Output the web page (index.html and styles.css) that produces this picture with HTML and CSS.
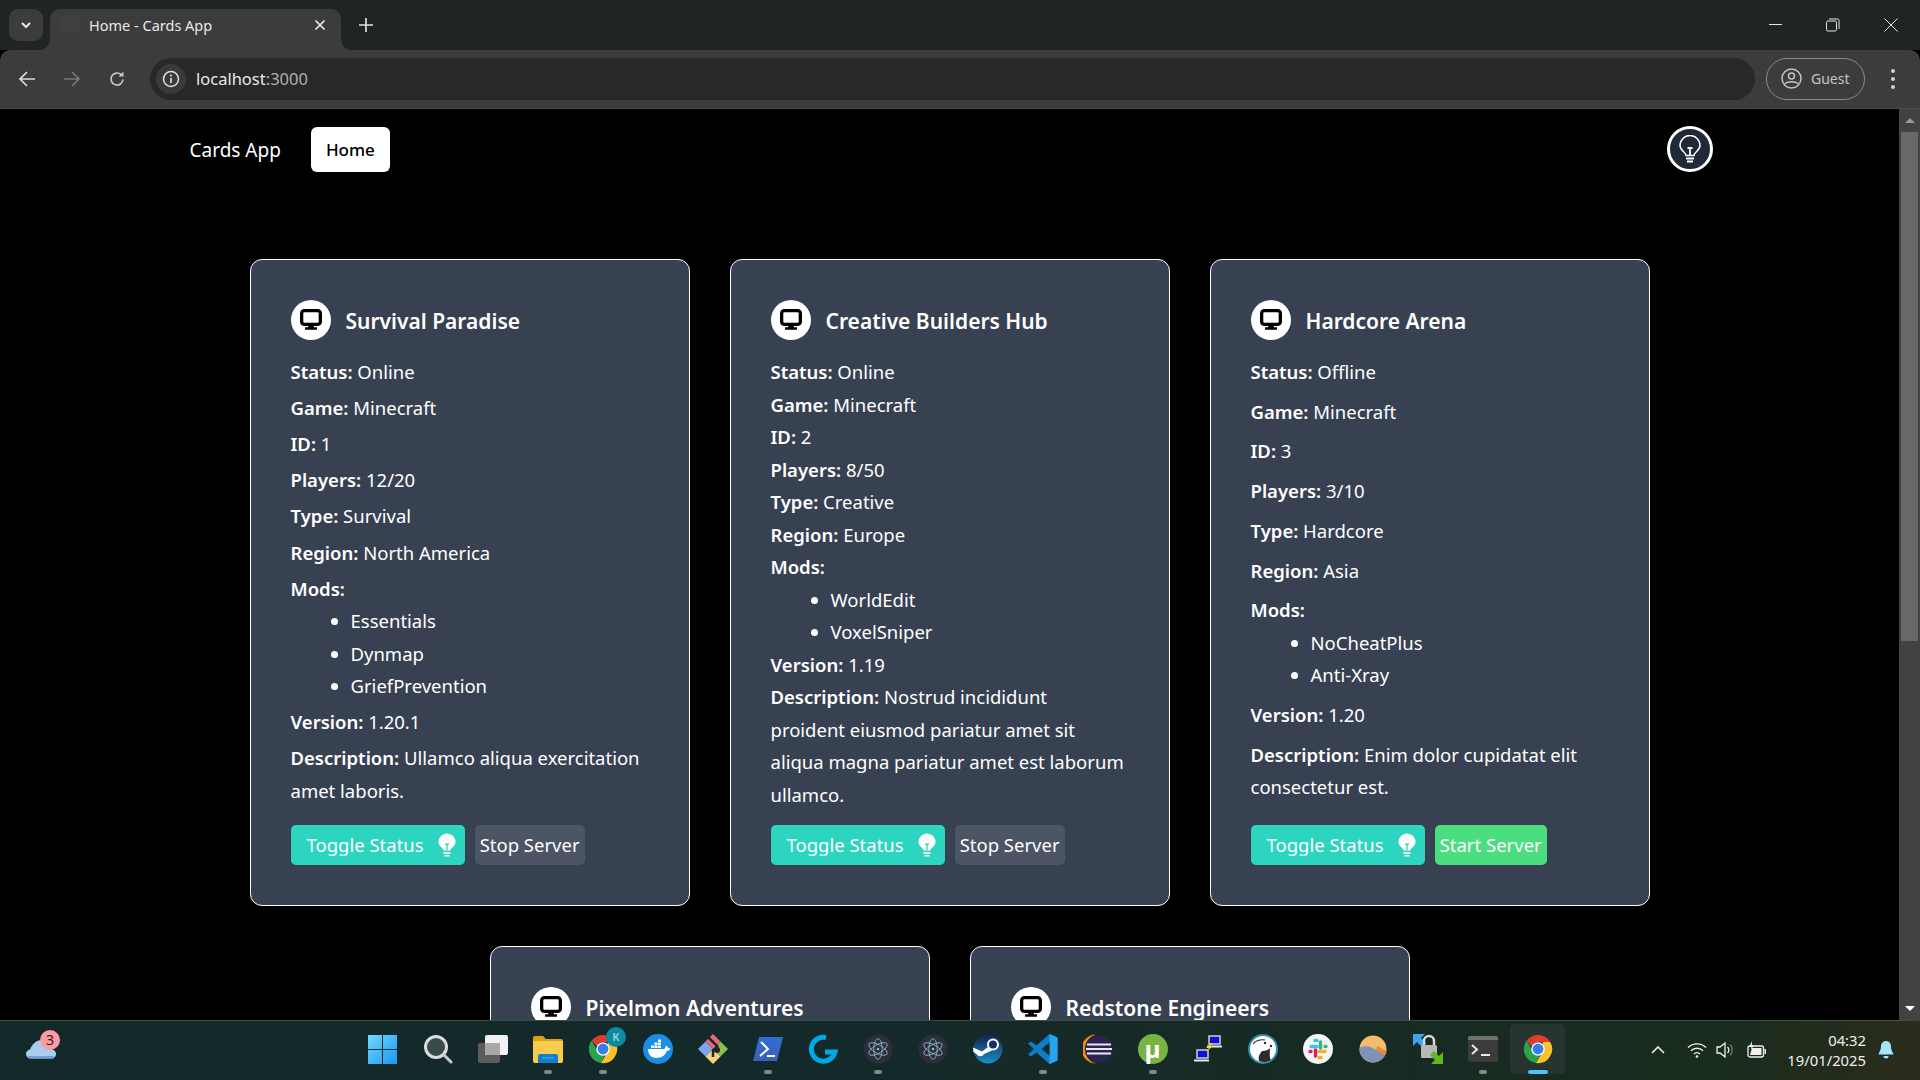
FILE: index.html
```html
<!DOCTYPE html>
<html lang="en">

<head>
    <meta charset="UTF-8">
    <title>Home - Cards App</title>
    <link rel="stylesheet" href="styles.css">
</head>

<body>
    <svg class="defs" width="0" height="0">
        <symbol id="bulb" viewBox="0 0 28 28">
            <path d="M10 20.500c0-3-6-5-6-10a10 10 0 0 1 20 0c0 5-6 7-6 10z" fill="currentColor" />
            <path d="M11.500 13h5M14 13v7.500" fill="none" stroke="var(--line)" stroke-width="1.600" />
            <path d="M10 23.500h8M11 26.500h6" fill="none" stroke="currentColor" stroke-width="1.800" />
        </symbol>
        <symbol id="monitor" viewBox="0 0 24 24">
            <rect x="1.800" y="1.800" width="20.400" height="15" rx="3" fill="#fff" stroke="#000" stroke-width="3.600" />
            <path d="M9 17h6v3H9zM5.500 20h13v2.500h-13z" fill="#000" />
        </symbol>
        <symbol id="chrome" viewBox="0 0 32 32">
            <path d="M16 1a15 15 0 0 1 13 7.500H16a7.500 7.500 0 0 0-6.900 4.600L3.900 7A15 15 0 0 1 16 1z" fill="#e33b2e" />
            <path d="M3.900 7l6.500 11.200a7.500 7.500 0 0 0 7.900 3.400L13.900 30.900A15 15 0 0 1 3.900 7z" fill="#2ba24c" />
            <path d="M29 8.500A15 15 0 0 1 13.900 30.900L20.500 19.500a7.500 7.500 0 0 0 .5-8.500V8.500z" fill="#fbc02d" />
            <circle cx="16" cy="16" r="7.200" fill="#fff" />
            <circle cx="16" cy="16" r="5.800" fill="#3b7de8" />
        </symbol>
        <symbol id="electron" viewBox="0 0 32 32">
            <circle cx="16" cy="16" r="15.500" fill="#2c2e3b" />
            <g fill="none" stroke="#8fb8c4" stroke-width=".9">
                <ellipse cx="16" cy="16" rx="11" ry="4.500" transform="rotate(30 16 16)" />
                <ellipse cx="16" cy="16" rx="11" ry="4.500" transform="rotate(90 16 16)" />
                <ellipse cx="16" cy="16" rx="11" ry="4.500" transform="rotate(150 16 16)" />
            </g>
            <circle cx="16" cy="16" r="1.400" fill="#8fb8c4" />
        </symbol>
    </svg>

    <header class="tabstrip">
        <button class="tab-menu">
            <svg width="12" height="12" viewBox="0 0 12 12"><path d="M2 4l4 4 4-4" fill="none" stroke="#e8e8e8" stroke-width="2" /></svg>
        </button>
        <div class="tab">
            <span class="favicon"></span>
            <span class="tab-title">Home - Cards App</span>
            <svg width="12" height="12" viewBox="0 0 12 12"><path d="M1.500 1.500l9 9M10.500 1.500l-9 9" stroke="#e8e8e8" stroke-width="1.700" /></svg>
        </div>
        <svg class="new-tab" width="14" height="14" viewBox="0 0 14 14"><path d="M7 0v14M0 7h14" stroke="#e0e0e0" stroke-width="1.700" /></svg>
        <div class="window-buttons">
            <svg width="14" height="14" viewBox="0 0 14 14"><path d="M1 6.500h13" stroke="#e6e6e6" /></svg>
            <svg width="14" height="14" viewBox="0 0 14 14"><rect x=".5" y="3" width="10" height="10" rx="1.500" fill="none" stroke="#e6e6e6" /><path d="M3 1h8.500a1.500 1.500 0 0 1 1.500 1.500V11" fill="none" stroke="#e6e6e6" /></svg>
            <svg width="14" height="14" viewBox="0 0 14 14"><path d="M.5.500l13 13M13.500.500l-13 13" stroke="#e6e6e6" /></svg>
        </div>
    </header>

    <div class="toolbar">
        <svg class="nav-icon" width="18" height="18" viewBox="0 0 18 18"><path d="M17 9H2M9 2L2 9l7 7" fill="none" stroke="#dcdcdc" stroke-width="1.700" /></svg>
        <svg class="nav-icon" width="18" height="18" viewBox="0 0 18 18"><path d="M1 9h15M9 2l7 7-7 7" fill="none" stroke="#777" stroke-width="1.700" /></svg>
        <svg class="nav-icon" width="18" height="18" viewBox="0 0 18 18"><path d="M15 9.500A6 6 0 1 1 13.200 4.700" fill="none" stroke="#c8c8c8" stroke-width="1.700" /><path d="M15.500 1.500v5h-5z" fill="#c8c8c8" /></svg>
        <div class="omnibox">
            <span class="site-info">
                <svg width="18" height="18" viewBox="0 0 18 18"><circle cx="9" cy="9" r="7.500" fill="none" stroke="#e0e0e0" stroke-width="1.500" /><path d="M9 8v5" stroke="#e0e0e0" stroke-width="1.700" /><circle cx="9" cy="5.500" r="1.100" fill="#e0e0e0" /></svg>
            </span>
            <span class="url">localhost<span class="url-port">:3000</span></span>
        </div>
        <div class="profile">
            <svg width="21" height="21" viewBox="0 0 21 21"><circle cx="10.500" cy="10.500" r="9.500" fill="none" stroke="#c4c4c4" stroke-width="1.500" /><circle cx="10.500" cy="8" r="3" fill="none" stroke="#c4c4c4" stroke-width="1.500" /><path d="M4 16c1.500-3 11.500-3 13 0" fill="none" stroke="#c4c4c4" stroke-width="1.500" /></svg>
            <span>Guest</span>
        </div>
        <div class="kebab"><i></i><i></i><i></i></div>
    </div>

    <div class="viewport">
        <main class="page">
            <nav class="navbar">
                <a class="brand">Cards App</a>
                <a class="nav-active">Home</a>
                <button class="theme-toggle">
                    <svg width="28" height="28" viewBox="0 0 28 28" fill="none" stroke="#fff" stroke-width="1.500">
                        <path d="M10 20.500c0-3-6-5-6-10a10 10 0 0 1 20 0c0 5-6 7-6 10z" />
                        <path d="M11.500 13h5M14 13v7.500M10 23.500h8M11 26.500h6" stroke-width="1.800" />
                    </svg>
                </button>
            </nav>

            <section class="cards">
                <article class="card">
                    <div class="card-head">
                        <span class="card-icon"><svg width="22" height="22"><use href="#monitor" /></svg></span>
                        <h2>Survival Paradise</h2>
                    </div>
                    <div class="card-body">
                        <p><b>Status:</b> Online</p>
                        <p><b>Game:</b> Minecraft</p>
                        <p><b>ID:</b> 1</p>
                        <p><b>Players:</b> 12/20</p>
                        <p><b>Type:</b> Survival</p>
                        <p><b>Region:</b> North America</p>
                        <div>
                            <b>Mods:</b>
                            <ul>
                                <li>Essentials</li>
                                <li>Dynmap</li>
                                <li>GriefPrevention</li>
                            </ul>
                        </div>
                        <p><b>Version:</b> 1.20.1</p>
                        <p><b>Description:</b> Ullamco aliqua exercitation amet laboris.</p>
                        <div class="card-actions">
                            <button class="btn btn-toggle">Toggle Status <svg width="24" height="24"><use href="#bulb" /></svg></button>
                            <button class="btn btn-stop">Stop Server</button>
                        </div>
                    </div>
                </article>

                <article class="card">
                    <div class="card-head">
                        <span class="card-icon"><svg width="22" height="22"><use href="#monitor" /></svg></span>
                        <h2>Creative Builders Hub</h2>
                    </div>
                    <div class="card-body">
                        <p><b>Status:</b> Online</p>
                        <p><b>Game:</b> Minecraft</p>
                        <p><b>ID:</b> 2</p>
                        <p><b>Players:</b> 8/50</p>
                        <p><b>Type:</b> Creative</p>
                        <p><b>Region:</b> Europe</p>
                        <div>
                            <b>Mods:</b>
                            <ul>
                                <li>WorldEdit</li>
                                <li>VoxelSniper</li>
                            </ul>
                        </div>
                        <p><b>Version:</b> 1.19</p>
                        <p><b>Description:</b> Nostrud incididunt<br>proident eiusmod pariatur amet sit aliqua magna pariatur amet est laborum ullamco.</p>
                        <div class="card-actions">
                            <button class="btn btn-toggle">Toggle Status <svg width="24" height="24"><use href="#bulb" /></svg></button>
                            <button class="btn btn-stop">Stop Server</button>
                        </div>
                    </div>
                </article>

                <article class="card">
                    <div class="card-head">
                        <span class="card-icon"><svg width="22" height="22"><use href="#monitor" /></svg></span>
                        <h2>Hardcore Arena</h2>
                    </div>
                    <div class="card-body">
                        <p><b>Status:</b> Offline</p>
                        <p><b>Game:</b> Minecraft</p>
                        <p><b>ID:</b> 3</p>
                        <p><b>Players:</b> 3/10</p>
                        <p><b>Type:</b> Hardcore</p>
                        <p><b>Region:</b> Asia</p>
                        <div>
                            <b>Mods:</b>
                            <ul>
                                <li>NoCheatPlus</li>
                                <li>Anti-Xray</li>
                            </ul>
                        </div>
                        <p><b>Version:</b> 1.20</p>
                        <p><b>Description:</b> Enim dolor cupidatat elit consectetur est.</p>
                        <div class="card-actions">
                            <button class="btn btn-toggle">Toggle Status <svg width="24" height="24"><use href="#bulb" /></svg></button>
                            <button class="btn btn-start">Start Server</button>
                        </div>
                    </div>
                </article>

                <article class="card">
                    <div class="card-head">
                        <span class="card-icon"><svg width="22" height="22"><use href="#monitor" /></svg></span>
                        <h2>Pixelmon Adventures</h2>
                    </div>
                </article>

                <article class="card">
                    <div class="card-head">
                        <span class="card-icon"><svg width="22" height="22"><use href="#monitor" /></svg></span>
                        <h2>Redstone Engineers</h2>
                    </div>
                </article>
            </section>
        </main>

        <div class="scrollbar">
            <span class="arrow arrow-up"></span>
            <span class="thumb"></span>
            <span class="arrow arrow-down"></span>
        </div>
    </div>

    <footer class="taskbar">
        <div class="widgets">
            <svg width="30" height="20" viewBox="0 0 30 20"><path d="M5 19.500a4.500 4.500 0 0 1-1-9C6 5 11 1 15 1c5 0 10 5 11 9.500a4.500 4.500 0 0 1-1 9z" fill="#a9cdec" /><path d="M2 17h26v1a1.500 1.500 0 0 1-1.500 1.500h-23A1.500 1.500 0 0 1 2 18z" fill="#6fa5d8" /></svg>
            <span class="widgets-badge">3</span>
        </div>

        <div class="apps">
            <span class="app">
                <svg width="30" height="30" viewBox="0 0 30 30"><defs><linearGradient id="win" x1="0" y1="0" x2="1" y2="1"><stop offset="0" stop-color="#74d7ff" /><stop offset="1" stop-color="#1799ee" /></linearGradient></defs><path d="M0 1h14v14H0zM15 1h14v14H15zM0 16h14v14H0zM15 16h14v14H15z" fill="url(#win)" /></svg>
            </span>
            <span class="app">
                <svg width="30" height="30" viewBox="0 0 30 30"><circle cx="13" cy="13" r="10.500" fill="#3a4a4a" stroke="#d8dcdc" stroke-width="3" /><path d="M21 21l7 7" stroke="#c8cccc" stroke-width="3" stroke-linecap="round" /></svg>
            </span>
            <span class="app">
                <svg width="32" height="30" viewBox="0 0 32 30"><rect x="1" y="9" width="22" height="20" rx="2" fill="#5c5c5c" /><rect x="8" y="1" width="23" height="20" rx="2" fill="#f2f2f2" /><rect x="8" y="9" width="15" height="12" fill="#a8a8a8" /></svg>
            </span>
            <span class="app app-open">
                <svg width="30" height="28" viewBox="0 0 30 28"><path d="M0 3a2 2 0 0 1 2-2h8l3 3h15a2 2 0 0 1 2 2v2H0z" fill="#d9a215" /><path d="M0 6h30v20a2 2 0 0 1-2 2H2a2 2 0 0 1-2-2z" fill="#f9cd4c" /><path d="M5 21a2 2 0 0 1 2-2h16a2 2 0 0 1 2 2v7H5z" fill="#0f7fcf" /><path d="M9 23h12" stroke="#4ab0ee" /></svg>
            </span>
            <span class="app app-open">
                <svg width="30" height="30"><use href="#chrome" /></svg>
                <span class="chrome-badge">K</span>
            </span>
            <span class="app">
                <svg width="30" height="30" viewBox="0 0 30 30"><circle cx="15" cy="15" r="15" fill="#1b8ee6" /><path d="M5 15h16c1 0 1.500-2 1.500-3 1.500-.5 2.500 1 2.800 2 1 0 1.700.3 2 1-1 1.500-2.500 1.800-3.500 1.800C22.500 22 18 24 13 24c-5 0-8-4-8-9z" fill="#fff" /><path d="M8 11.500h3v2.500H8zM11.500 11.500h3v2.500h-3zM15 11.500h3v2.500h-3zM11.500 8.500h3V11h-3zM15 8.500h3V11h-3zM15 5.500h3V8h-3z" fill="#fff" /></svg>
            </span>
            <span class="app">
                <svg width="32" height="32" viewBox="0 0 32 32"><path d="M1 16l7.500-7.500L16 16l-7.500 7.500z" fill="#7ba5f0" /><path d="M16 16l7.500-7.500L31 16l-7.500 7.500z" fill="#86c253" /><path d="M8.500 23.500L16 16l7.500 7.500L16 31z" fill="#f5d77a" /><path d="M8.500 8.500L16 1l7.500 7.500L16 16z" fill="#e46c78" /><path d="M11 4l10 10M16 16v8M16 18l5-5" stroke="#2a2126" stroke-width="2.500" /><circle cx="20" cy="17" r="3" fill="#2a2126" /></svg>
            </span>
            <span class="app app-open">
                <svg width="30" height="24" viewBox="0 0 30 24"><defs><linearGradient id="ps" x1="0" y1="0" x2="0" y2="1"><stop offset="0" stop-color="#2f6fd6" /><stop offset="1" stop-color="#3d5fb8" /></linearGradient></defs><path d="M6 0h24l-6 24H0z" fill="url(#ps)" /><path d="M8 5l7 7-8 7" fill="none" stroke="#fff" stroke-width="2" /><path d="M14 19h8" stroke="#fff" stroke-width="2" /></svg>
            </span>
            <span class="app">
                <svg width="30" height="30" viewBox="0 0 30 30"><path d="M18 3.500A12 12 0 1 0 27 18H17" fill="none" stroke="#00a9e6" stroke-width="5" /></svg>
            </span>
            <span class="app app-open">
                <svg width="30" height="30"><use href="#electron" /></svg>
            </span>
            <span class="app">
                <svg width="30" height="30"><use href="#electron" /></svg>
            </span>
            <span class="app">
                <svg width="30" height="30" viewBox="0 0 30 30"><defs><linearGradient id="steam" x1="0" y1="0" x2="0" y2="1"><stop offset="0" stop-color="#0f2450" /><stop offset="1" stop-color="#1b8ec4" /></linearGradient></defs><circle cx="15" cy="15" r="14.500" fill="url(#steam)" /><path d="M0 13.500l9 4 8-6 2 5-8 3.500a4 4 0 0 1-7 .5L.5 18z" fill="#fff" /><circle cx="20" cy="10.500" r="5" fill="#16325e" stroke="#fff" stroke-width="2" /></svg>
            </span>
            <span class="app app-open">
                <svg width="30" height="30" viewBox="0 0 30 30"><path d="M29.500 3.500v23L21.500 30 8.500 18.500 3 22.500 0 20.500 6 15 0 9.500 3 7.500l5.500 4L21.500 0z" fill="#0e7ec9" /><path d="M21.500 0l8 3.500v23l-8 3.500z" fill="#29a3ee" /><path d="M21.500 8.500L13.500 15l8 6.500z" fill="#152a2b" /></svg>
            </span>
            <span class="app">
                <svg width="30" height="30" viewBox="0 0 30 30"><path d="M13 .500a14.500 14.500 0 0 0 0 29 15 15 0 0 1 0-29z" fill="#f08a1a" /><circle cx="16" cy="15" r="13.500" fill="#2c2350" /><path d="M4 10.500h24M3 15h26M4 19.500h24" stroke="#e8e8f0" stroke-width="2" /></svg>
            </span>
            <span class="app app-open">
                <span class="torrent">µ</span>
            </span>
            <span class="app">
                <svg width="30" height="30" viewBox="0 0 30 30"><rect x="16" y="2" width="11" height="8" fill="#0f0fd8" stroke="#c8d0d8" stroke-width="1.500" /><path d="M14 11.500h15v2H14z" fill="#e8e8e8" /><rect x="4" y="16" width="11" height="8" fill="#0f0fd8" stroke="#c8d0d8" stroke-width="1.500" /><path d="M1 25.500h15v2H1z" fill="#e8e8e8" /><path d="M18 9l-5 5h3l-3 4 7-6h-3l3-3z" fill="#f8e020" /></svg>
            </span>
            <span class="app">
                <svg width="30" height="30" viewBox="0 0 30 30"><circle cx="15" cy="15" r="14" fill="#fff" stroke="#2b93a8" stroke-width="2" /><path d="M11 27c-1-3 0-7 3-10 3 0 7-1 8-3 0 5-1 9 1 12-3 2-8 3-12 1z" fill="#2f2a28" /><path d="M5 10c2-3 7-5 12-4" fill="none" stroke="#2f2a28" stroke-width="1.200" /><circle cx="17" cy="9" r="1.200" fill="#2f2a28" /><circle cx="23" cy="12" r="1.200" fill="#2f2a28" /></svg>
            </span>
            <span class="app">
                <svg width="30" height="30" viewBox="0 0 30 30"><circle cx="15" cy="15" r="15" fill="#f4f4f4" /><g stroke-width="3.400" stroke-linecap="round" fill="none"><path d="M8 12.500h6M12 6.500h2" stroke="#36c5f0" /><path d="M17.500 8v6M23 12.500h-1" stroke="#2eb67d" /><path d="M22 17.500h-6M18 23.500h-2" stroke="#ecb22e" /><path d="M12.500 22v-6M7 17.500h1" stroke="#e01e5a" /></g></svg>
            </span>
            <span class="app">
                <svg width="28" height="30" viewBox="0 0 28 30"><defs><clipPath id="flux"><circle cx="14" cy="15" r="13.500" /></clipPath></defs><g clip-path="url(#flux)"><path d="M0 0h28v30H0z" fill="#f2bd6a" /><path d="M18 12c3 1 6 4 10 5v6H16z" fill="#e88a3c" /><path d="M0 14c6-3 12-2 17 2 4 3 7 5 11 5v9H0z" fill="#7d93b8" /></g></svg>
            </span>
            <span class="app">
                <svg width="32" height="32" viewBox="0 0 32 32"><path d="M1 1h12l-4 4 5 5-4 4-5-5-4 4z" fill="#3aa6f2" /><rect x="9" y="12" width="16" height="13" rx="1.500" fill="#b8b8b8" /><path d="M12 12V8a5 5 0 0 1 10 0v4" fill="none" stroke="#d8d8d8" stroke-width="2.500" /><path d="M31 31H19l4-4-5-5 4-4 5 5 4-4z" fill="#62b81e" /></svg>
            </span>
            <span class="app app-open">
                <svg width="30" height="26" viewBox="0 0 30 26"><rect width="30" height="26" rx="2" fill="#3c3c3c" /><path d="M0 2a2 2 0 0 1 2-2h26a2 2 0 0 1 2 2v2H0z" fill="#707070" /><path d="M4 9l5 4.500L4 18" fill="none" stroke="#e8e8e8" stroke-width="2" /><path d="M13 19h9" stroke="#e8e8e8" stroke-width="2" /></svg>
            </span>
            <span class="app app-active">
                <svg width="30" height="30"><use href="#chrome" /></svg>
            </span>
        </div>

        <div class="tray">
            <svg class="tray-chevron" width="14" height="8" viewBox="0 0 14 8"><path d="M1 7l6-6 6 6" fill="none" stroke="#f0f0f0" stroke-width="1.600" /></svg>
            <svg class="tray-wifi" width="20" height="16" viewBox="0 0 20 16"><g fill="none" stroke="#f0f0f0" stroke-width="1.400"><path d="M1 5.500a13 13 0 0 1 18 0" /><path d="M4 8.800a8.500 8.500 0 0 1 12 0" /><path d="M7 12a4 4 0 0 1 6 0" /></g><circle cx="10" cy="14.500" r="1.300" fill="#f0f0f0" /></svg>
            <svg class="tray-volume" width="20" height="18" viewBox="0 0 20 18"><path d="M1 6h3l5-4v14l-5-4H1z" fill="none" stroke="#f0f0f0" stroke-width="1.300" /><path d="M11.500 6a4 4 0 0 1 0 6" fill="none" stroke="#f0f0f0" stroke-width="1.300" /><path d="M14 3.500a8 8 0 0 1 0 11" fill="none" stroke="#777" stroke-width="1.300" /></svg>
            <svg class="tray-battery" width="20" height="18" viewBox="0 0 20 18"><rect x="1" y="5" width="15.500" height="11" rx="2" fill="none" stroke="#f0f0f0" stroke-width="1.300" /><path d="M3 14l2-7h9.500v7z" fill="#f0f0f0" /><path d="M17.500 8h1.500v5h-1.500z" fill="#f0f0f0" /><path d="M5 0L2 6h2.500L3.500 9 7 4.500H4.800z" fill="#f0f0f0" /></svg>
            <div class="clock">
                <span>04:32</span>
                <span>19/01/2025</span>
            </div>
            <svg class="tray-bell" width="16" height="20" viewBox="0 0 16 20"><path d="M8 1a5 5 0 0 1 5 5c0 5 2.500 7 2.500 8.500H.5C.5 13 3 11 3 6a5 5 0 0 1 5-5z" fill="#a5e4fb" /><path d="M5.500 16h5a2.500 2.500 0 0 1-5 0z" fill="#a5e4fb" /></svg>
        </div>
    </footer>
</body>

</html>
```

FILE: styles.css
```css
* {
    margin: 0;
    padding: 0;
    box-sizing: border-box;
}

html,
body {
    height: 100%;
    overflow: hidden;
}

body {
    display: flex;
    flex-direction: column;
    background: #000;
    color: #fff;
    font-family: "Noto Sans", "Open Sans", sans-serif;
}

.defs {
    position: absolute;
}

button {
    border: none;
    font: inherit;
    color: inherit;
}

/* browser tabs */

.tabstrip {
    flex: none;
    height: 50px;
    display: flex;
    align-items: flex-end;
    padding-left: 9px;
    background: #212424;
}

.tab-menu {
    width: 34px;
    height: 32px;
    margin: 0 7px 9px 0;
    display: flex;
    align-items: center;
    justify-content: center;
    background: #3c3c3c;
    border-radius: 9px;
}

.tab {
    position: relative;
    width: 291px;
    height: 41px;
    display: flex;
    align-items: center;
    padding: 0 15px 9px 11px;
    background: #3c3c3c;
    border-radius: 10px 10px 0 0;
}

.tab:before,
.tab:after {
    content: "";
    position: absolute;
    bottom: 0;
    width: 10px;
    height: 10px;
}

.tab:before {
    left: -10px;
    background: radial-gradient(circle at 0 0, transparent 9.5px, #3c3c3c 10px);
}

.tab:after {
    right: -10px;
    background: radial-gradient(circle at 100% 0, transparent 9.5px, #3c3c3c 10px);
}

.favicon {
    width: 19px;
    height: 16px;
    margin-right: 9px;
    background: #404040;
}

.tab-title {
    flex: 1;
    font-size: 14.5px;
    color: #e8e8e8;
}

.new-tab {
    align-self: center;
    margin-left: 18px;
}

.window-buttons {
    align-self: stretch;
    margin-left: auto;
    display: flex;
    gap: 44px;
    align-items: center;
    padding: 0 22px 1px 0;
}

/* address bar */

.toolbar {
    flex: none;
    height: 59px;
    display: flex;
    align-items: center;
    padding-bottom: 1px;
    background: #3c3c3c;
    border-bottom: 1px solid #4a4a4a;
    border-radius: 10px 10px 0 0;
}

.nav-icon {
    margin-left: 18px;
    margin-right: 9px;
}

.omnibox {
    flex: 1;
    height: 42px;
    margin-left: 15px;
    display: flex;
    align-items: center;
    padding-left: 6px;
    background: #282828;
    border-radius: 21px;
}

.site-info {
    width: 30px;
    height: 30px;
    display: flex;
    align-items: center;
    justify-content: center;
    background: #3a3a3a;
    border-radius: 50%;
}

.url {
    margin-left: 10px;
    font-size: 16.5px;
    color: #e8e8e8;
}

.url-port {
    color: #b0b0b0;
}

.profile {
    width: 99px;
    height: 42px;
    margin-left: 11px;
    display: flex;
    align-items: center;
    gap: 9px;
    padding-left: 14px;
    font-size: 14px;
    color: #c4c4c4;
    border: 1px solid #8a8a8a;
    border-radius: 21px;
}

.kebab {
    width: 55px;
    display: flex;
    flex-direction: column;
    align-items: center;
    gap: 4px;
}

.kebab i {
    width: 4px;
    height: 4px;
    background: #d0d0d0;
    border-radius: 50%;
}

/* page */

.viewport {
    flex: 1;
    min-height: 0;
    display: flex;
}

.page {
    flex: 1;
    overflow: hidden;
}

.navbar {
    max-width: 1536px;
    margin: 0 auto;
    display: flex;
    align-items: center;
    padding: 17px 5px 0 8px;
}

.brand {
    padding-top: 2px;
    font-size: 19px;
}

.nav-active {
    margin-left: 30px;
    padding: 0 15px;
    height: 45px;
    line-height: 46px;
    font-size: 17px;
    font-weight: 500;
    color: #000;
    background: #fff;
    border-radius: 6px;
}

.theme-toggle {
    width: 46px;
    height: 46px;
    margin-left: auto;
    display: flex;
    align-items: center;
    justify-content: center;
    background: #1f2937;
    border: 3px solid #fff;
    border-radius: 50%;
}

.cards {
    width: 1400px;
    margin: 87px auto 0;
    display: flex;
    flex-wrap: wrap;
    justify-content: center;
    gap: 40px;
}

.card {
    width: 440px;
    display: flex;
    flex-direction: column;
    padding: 40px;
    background: #374151;
    border: 1px solid #fff;
    border-radius: 12px;
}

.card-head {
    display: flex;
    align-items: center;
    gap: 15px;
    margin-bottom: 16px;
}

.card-icon {
    width: 40px;
    height: 40px;
    display: flex;
    align-items: center;
    justify-content: center;
    background: #fff;
    border-radius: 50%;
}

h2 {
    padding-top: 2px;
    font-size: 21px;
    font-weight: 600;
}

.card-body {
    flex: 1;
    display: flex;
    flex-direction: column;
    justify-content: space-between;
    font-size: 18.5px;
    line-height: 32.5px;
}

.card-body b {
    font-weight: 600;
}

ul {
    padding-left: 60px;
}

.card-actions {
    display: flex;
    gap: 10px;
    margin-top: 14px;
}

.btn {
    height: 40px;
    display: flex;
    align-items: center;
    padding: 0 5px;
    font-size: 18.5px;
    border-radius: 5px;
}

.btn-toggle {
    gap: 11px;
    padding: 0 6px 0 16px;
    color: #fff;
    background: #2dd4bf;
    --line: #2dd4bf;
}

.btn-stop {
    background: #4b5563;
}

.btn-start {
    background: #4ade80;
}

.scrollbar {
    flex: none;
    width: 21px;
    display: flex;
    flex-direction: column;
    align-items: center;
    background: #424242;
}

.arrow {
    width: 0;
    height: 0;
    margin: 9px 0;
    border-left: 5px solid transparent;
    border-right: 5px solid transparent;
}

.arrow-up {
    border-bottom: 5px solid #999;
}

.arrow-down {
    margin-top: auto;
    border-top: 5px solid #fff;
}

.thumb {
    width: 17px;
    height: 509px;
    background: #686868;
}

/* windows taskbar */

.taskbar {
    flex: none;
    height: 60px;
    display: grid;
    grid-template-columns: 1fr auto 1fr;
    align-items: center;
    background: linear-gradient(90deg, #14292a 0, #14292a 45%, #172a24 70%, #1a2c1c 90%, #2a2c1c 100%);
    border-top: 1px solid #3c4a48;
}

.widgets {
    position: relative;
    width: 30px;
    height: 20px;
    margin: 0 0 4px 26px;
}

.widgets-badge {
    position: absolute;
    top: -9px;
    right: -4px;
    width: 20px;
    height: 20px;
    text-align: center;
    font-size: 14px;
    line-height: 20px;
    color: #222;
    background: #ff9aa2;
    border-radius: 50%;
}

.apps {
    display: flex;
    margin-bottom: 3px;
}

.app {
    position: relative;
    width: 55px;
    height: 50px;
    display: flex;
    align-items: center;
    justify-content: center;
}

.app-open:after,
.app-active:after {
    content: "";
    position: absolute;
    bottom: 0;
    left: 24px;
    width: 8px;
    height: 4px;
    background: #7d8a8a;
    border-radius: 2px;
}

.app-active {
    background: #26352f;
    border-radius: 5px;
}

.app-active:after {
    left: 18px;
    width: 20px;
    background: #4cc2ff;
}

.chrome-badge {
    position: absolute;
    top: 3px;
    right: 4px;
    width: 20px;
    height: 20px;
    text-align: center;
    font-size: 11px;
    font-weight: 700;
    line-height: 20px;
    color: #7fd0d8;
    background: #0b8aa0;
    border-radius: 50%;
}

.torrent {
    width: 30px;
    height: 30px;
    text-align: center;
    font-size: 24px;
    font-weight: 700;
    line-height: 30px;
    color: #fff;
    background: #78b444;
    border-radius: 50%;
}

.tray {
    display: flex;
    align-items: center;
    justify-content: flex-end;
    padding: 0 26px 2px 0;
}

.tray-wifi {
    margin-left: 22px;
}

.tray-volume {
    margin-left: 9px;
}

.tray-battery {
    margin-left: 11px;
}

.clock {
    margin-left: 20px;
    display: flex;
    flex-direction: column;
    align-items: flex-end;
    font-size: 14.8px;
    line-height: 20px;
    color: #f0f0f0;
}

.tray-bell {
    margin-left: 12px;
}
```
